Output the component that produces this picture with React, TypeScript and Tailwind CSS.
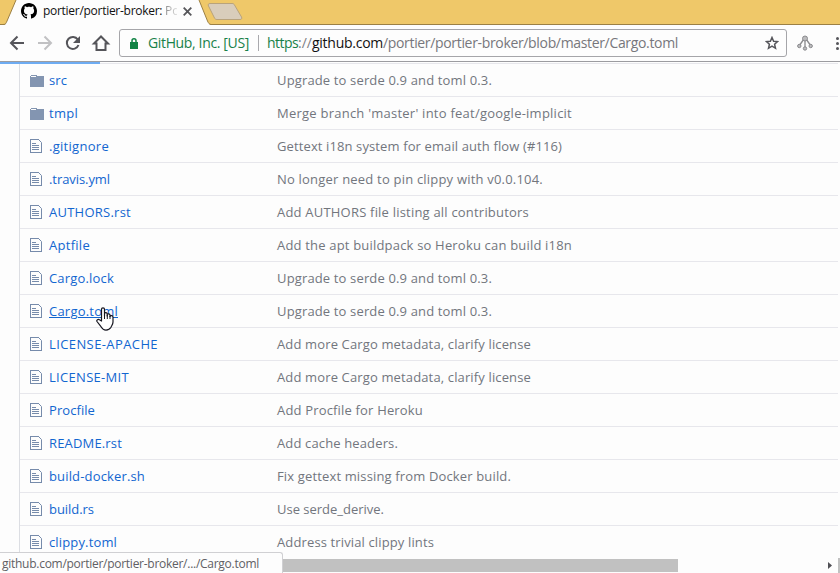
import { useLayoutEffect, useRef } from "react";

type TextProps = { text: string; width: number; className?: string };

// Spreads the letters so that the text takes up the given width.
function FitText({ text, width, className = "" }: TextProps) {
  const ref = useRef<HTMLSpanElement>(null);
  useLayoutEffect(() => {
    const el = ref.current;
    if (!el) return;
    const fit = () => {
      el.style.letterSpacing = "0px";
      const natural = el.getBoundingClientRect().width;
      el.style.letterSpacing = `${(width - natural) / text.length}px`;
    };
    fit();
    document.fonts.ready.then(fit);
  }, [text, width]);
  return (
    <span ref={ref} className={`inline-block whitespace-pre ${className}`}>
      {text}
    </span>
  );
}

type Entry = { name: string; w: number; msg: string; mw: number; dir?: boolean; hover?: boolean };

const entries: Entry[] = [
  { name: "src", w: 18, msg: "Upgrade to serde 0.9 and toml 0.3.", mw: 215, dir: true },
  { name: "tmpl", w: 29, msg: "Merge branch 'master' into feat/google-implicit", mw: 295, dir: true },
  { name: ".gitignore", w: 60, msg: "Gettext i18n system for email auth flow (#116)", mw: 285 },
  { name: ".travis.yml", w: 61, msg: "No longer need to pin clippy with v0.0.104.", mw: 266 },
  { name: "AUTHORS.rst", w: 82, msg: "Add AUTHORS file listing all contributors", mw: 252 },
  { name: "Aptfile", w: 41, msg: "Add the apt buildpack so Heroku can build i18n", mw: 295 },
  { name: "Cargo.lock", w: 65, msg: "Upgrade to serde 0.9 and toml 0.3.", mw: 215 },
  { name: "Cargo.toml", w: 69, msg: "Upgrade to serde 0.9 and toml 0.3.", mw: 215, hover: true },
  { name: "LICENSE-APACHE", w: 109, msg: "Add more Cargo metadata, clarify license", mw: 254 },
  { name: "LICENSE-MIT", w: 80, msg: "Add more Cargo metadata, clarify license", mw: 254 },
  { name: "Procfile", w: 46, msg: "Add Procfile for Heroku", mw: 146 },
  { name: "README.rst", w: 73, msg: "Add cache headers.", mw: 121 },
  { name: "build-docker.sh", w: 96, msg: "Fix gettext missing from Docker build.", mw: 234 },
  { name: "build.rs", w: 45, msg: "Use serde_derive.", mw: 107 },
  { name: "clippy.toml", w: 68, msg: "Address trivial clippy lints", mw: 157 },
];

function FolderIcon() {
  return (
    <svg className="mt-px h-3 w-3.5 shrink-0" viewBox="0 0 14 12" shapeRendering="crispEdges">
      <path fill="#8395b1" d="M0 1h1V0h6v1h7v11H0z" />
      <path fill="#fdfdfd" d="M1 1h5v1H1z M7 0h7v1H7z" />
    </svg>
  );
}

function FileIcon() {
  return (
    <svg className="h-3.5 w-3.5 shrink-0" viewBox="0 0 14 14" shapeRendering="crispEdges">
      <path fill="#768bab" d="M0 0h9v1H1v12h10V4h1v10H0z M2 4h4v1H2z M2 6h7v1H2z M2 8h7v1H2z M2 10h7v1H2z" />
      <path fill="none" stroke="#768bab" shapeRendering="auto" d="M8.5.5l3 3V5" />
    </svg>
  );
}

function HandCursor() {
  return (
    <svg className="absolute left-[96px] top-[307px] h-6 w-[19px]" viewBox="0 0 19 24">
      <path
        fill="#fff"
        stroke="#15151f"
        strokeWidth="1.2"
        strokeLinejoin="round"
        d="M5.5 14V2.200C5.500.4 8.500.4 8.500 2.200V9 6.700c0-1.500 2.700-1.300 2.700.2V9 7.700c0-1.300 2.800-1.100 2.800.3v1.500c0-1.400 3-1.200 3 .4V15c0 2.500-1.500 3.800-2 5.300-1 1.800-2.500 2.800-5 2.800-2.800 0-3.700-1.200-5-3.400L1 14.500c-.8-1.300 1.200-2.800 2.500-1.700z"
      />
      <path stroke="#15151f" d="M8.500 8v4M11.300 8v4M14 9v3" />
    </svg>
  );
}

function TabStrip() {
  return (
    <header className="relative h-[25px] bg-[#efc869]">
      <svg className="absolute left-0 top-0 h-[25px] w-[840px]" viewBox="0 0 840 25">
        <path stroke="#9c8044" d="M0 24.5h840" />
        <path fill="#fdfdfd" d="M4 25c2-.5 2-2 3-4L16 0h183l8.500 21c1 2 1.500 3.500 4 4z" />
        <path fill="none" stroke="#9c8044" d="M0 24.500h3c3 0 3-1.500 4-3.500L16 0M199 0l8.500 21c1 2 1.500 3.500 4 3.500" />
        <path fill="#d9cdbb" stroke="#b9a37b" d="M210 3.500h22c1.500 0 2 .5 2.500 1.500l7 12c.8 1.500 0 2.500-1.500 2.500h-23c-1.500 0-2-.5-2.500-1.500l-6-12c-.8-1.500 0-2.500 1.500-2.500z" />
      </svg>
      <div className="relative flex h-[22px] items-center pl-[21px]">
        <svg className="h-4 w-4 shrink-0" viewBox="0 0 16 16">
          <path d="M8 0C3.580 0 0 3.580 0 8c0 3.540 2.290 6.530 5.470 7.590.4.070.55-.17.55-.38 0-.19-.01-.82-.01-1.490-2.010.37-2.530-.49-2.690-.94-.09-.23-.48-.94-.82-1.130-.28-.15-.68-.52-.01-.53.63-.01 1.080.58 1.230.82.72 1.210 1.870.87 2.330.66.070-.52.28-.87.51-1.070-1.780-.2-3.640-.89-3.640-3.950 0-.87.31-1.590.82-2.150-.08-.2-.36-1.020.08-2.120 0 0 .67-.21 2.200.82.64-.18 1.320-.27 2-.27s1.360.09 2 .27c1.530-1.040 2.200-.82 2.200-.82.44 1.100.16 1.920.08 2.120.51.56.82 1.270.82 2.150 0 3.070-1.870 3.750-3.650 3.950.29.25.54.73.54 1.480 0 1.070-.01 1.930-.01 2.200 0 .21.15.46.55.38A8.010 8.010 0 0 0 16 8c0-4.420-3.580-8-8-8z" />
        </svg>
        <div className="ml-1.5 flex w-[134px] overflow-hidden text-[12px] leading-[18px] text-[#111]">
          <FitText text="portier/portier-broker: " width={122} />
          <span className="bg-gradient-to-r from-[#888] to-[#eee] bg-clip-text text-transparent">Po</span>
        </div>
        <svg className="ml-1.5 h-[9px] w-[9px]" viewBox="0 0 9 9">
          <path stroke="#56565a" strokeWidth="1.8" d="M.7.7l7.600 7.600M8.300.7L.7 8.300" />
        </svg>
      </div>
    </header>
  );
}

function Toolbar() {
  return (
    <div className="flex h-[37px] items-center border-b border-[#9c9ca0] bg-[#fdfdfd]">
      <svg className="h-9 w-[119px] shrink-0" viewBox="0 0 119 36" fill="none" stroke="#55555a" strokeWidth="2">
        <path d="M24 18H11.500M17.500 11.500L11 18l6.500 6.500" />
        <path stroke="#c1c1c3" d="M38 18h12.500M44.500 11.500L51 18l-6.500 6.500" />
        <path d="M77.800 14.500A6 6 0 1 0 78.500 20" />
        <path fill="#55555a" stroke="none" d="M80 11v7h-7z" />
        <path d="M94 18.500l7-7 7 7h-2.500V25h-9v-6.500z" />
      </svg>
      <div className="flex h-7 w-[668px] shrink-0 items-center rounded-[3px] border border-[#a5a5a9] bg-[#fdfdfd] pl-[10px] text-[14px] leading-5">
        <svg className="h-[11px] w-2" viewBox="0 0 8 11">
          <path fill="#118344" d="M0 4h8v7H0z" />
          <path fill="none" stroke="#118344" strokeWidth="1.500" d="M2 5V2.800a2 2 0 0 1 4 0V5" />
        </svg>
        <FitText text="GitHub, Inc. [US]" width={101} className="ml-[10px] text-[#188149]" />
        <span className="ml-[9px] mr-2 h-4 w-px bg-[#a9a9ad]" />
        <FitText text="https" width={31} className="text-[#188149]" />
        <FitText text="://" width={14} className="text-[#808085]" />
        <FitText text="github.com" width={71} className="text-[#111]" />
        <FitText text="/portier/portier-broker/blob/master/Cargo.toml" width={295} className="text-[#77777c]" />
        <svg className="ml-auto mr-[7px] h-3.5 w-3.5" viewBox="0 0 14 14">
          <path fill="none" stroke="#55555a" strokeWidth="1.500" d="M7 1.500l1.600 3.700 4 .4-3 2.700.9 4L7 10.200l-3.500 2.100.9-4-3-2.700 4-.4z" />
        </svg>
      </div>
      <svg className="ml-[10px] h-4 w-4 shrink-0" viewBox="0 0 16 16" fill="#bcbcbe" stroke="#8b8b8e">
        <path strokeWidth="1.300" d="M8 4v9M7 4l-5 7M9 4l5 7" />
        <circle cx="8" cy="3.500" r="2.500" />
        <circle cx="2.300" cy="11" r="1.700" />
        <circle cx="8" cy="13.500" r="1.700" />
        <circle cx="13.700" cy="11" r="1.700" />
      </svg>
      <div className="ml-[23px] flex w-[3px] shrink-0 flex-col gap-0.5">
        <i className="size-[3px] rounded-full bg-[#55555a]" />
        <i className="size-[3px] rounded-full bg-[#55555a]" />
        <i className="size-[3px] rounded-full bg-[#55555a]" />
      </div>
    </div>
  );
}

export default function App() {
  return (
    <div className="relative h-[573px] w-[840px] overflow-hidden bg-[#fdfdfd] font-['Open_Sans','Noto_Sans',sans-serif] text-[13px]">
      <TabStrip />
      <Toolbar />
      <main className="h-[511px] overflow-hidden">
        <div className="ml-[19px] mr-0.5 border-l border-[#dcdee3] pt-px">
          {entries.map((e) => (
            <div key={e.name} className="flex h-[33px] items-center border-t border-[#e7e7ec] pl-[10px]">
              {e.dir ? <FolderIcon /> : <FileIcon />}
              <div className="ml-[5px] w-[228px] leading-5">
                <FitText
                  text={e.name}
                  width={e.w}
                  className={e.hover ? "text-[#1266d0] underline decoration-1 underline-offset-1" : "text-[#1266d0]"}
                />
              </div>
              <FitText text={e.msg} width={e.mw} className="leading-5 text-[#72767d]" />
            </div>
          ))}
        </div>
      </main>
      <div className="absolute left-0 top-[62px] h-0.5 w-[100px] bg-[#6eacf2]" />
      <div className="absolute bottom-0 left-0 flex h-[15px] w-[840px] bg-[#fdfdfd]">
        <div className="mt-px h-[13px] w-[678px] bg-[#c1c1c1]" />
        <svg className="ml-[150px] mt-1 h-[7px] w-1" viewBox="0 0 4 7">
          <path fill="#505055" d="M0 0l4 3.500L0 7z" />
        </svg>
        <div className="ml-auto h-full w-0.5 bg-[#c1c1c1]" />
      </div>
      <div className="absolute bottom-0 left-0 h-[21px] w-[283px] rounded-tr-[3px] border-r border-t border-[#d0d0d3] bg-[#fdfdfd] pl-0.5 text-[12px] leading-[21px] text-[#606064]">
        <FitText text="github.com/portier/portier-broker/.../Cargo.toml" width={257} />
      </div>
      <HandCursor />
    </div>
  );
}
